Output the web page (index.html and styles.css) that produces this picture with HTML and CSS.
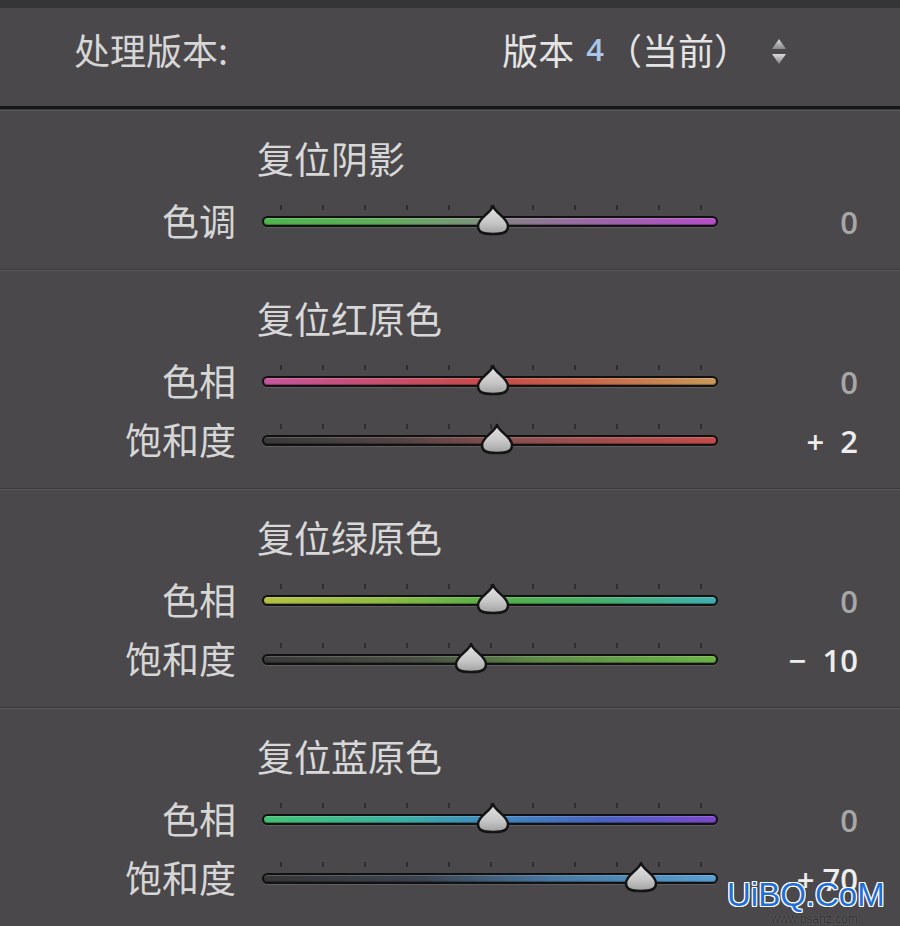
FILE: index.html
```html
<!DOCTYPE html>
<html lang="zh">
<head>
<meta charset="utf-8">
<title>处理版本</title>
<link rel="stylesheet" href="styles.css">
</head>
<body>
<div class="panel">
  <div class="header">
    <span class="hlabel">处理版本:</span>
    <span class="hvalue">版本 <span class="num">4</span>（当前）<svg class="updown" width="18" height="30" viewBox="0 0 18 30"><defs><linearGradient id="ag" x1="0" y1="0" x2="0" y2="1"><stop offset="0" stop-color="#dadada"/><stop offset="1" stop-color="#858585"/></linearGradient></defs><path d="M9 2 L16 12 L2 12 Z" fill="url(#ag)"/><path d="M2 17 L16 17 L9 27 Z" fill="url(#ag)"/></svg></span>
  </div>

  <div class="section">
    <div class="title">复位阴影</div>
    <div class="row">
      <div class="label">色调</div>
      <div class="slider">
        <div class="ticks"></div>
        <div class="track tone"></div>
        <svg class="thumb" style="left:213px" width="36" height="32" viewBox="0 0 36 32"><use href="#thumbshape"/></svg>
      </div>
      <div class="value zero">0</div>
    </div>
  </div>

  <div class="section">
    <div class="title">复位红原色</div>
    <div class="row">
      <div class="label">色相</div>
      <div class="slider">
        <div class="ticks"></div>
        <div class="track red-hue"></div>
        <svg class="thumb" style="left:213px" width="36" height="32" viewBox="0 0 36 32"><use href="#thumbshape"/></svg>
      </div>
      <div class="value zero">0</div>
    </div>
    <div class="row">
      <div class="label">饱和度</div>
      <div class="slider">
        <div class="ticks"></div>
        <div class="track red-sat"></div>
        <svg class="thumb" style="left:217px" width="36" height="32" viewBox="0 0 36 32"><use href="#thumbshape"/></svg>
      </div>
      <div class="value">+  2</div>
    </div>
  </div>

  <div class="section">
    <div class="title">复位绿原色</div>
    <div class="row">
      <div class="label">色相</div>
      <div class="slider">
        <div class="ticks"></div>
        <div class="track green-hue"></div>
        <svg class="thumb" style="left:213px" width="36" height="32" viewBox="0 0 36 32"><use href="#thumbshape"/></svg>
      </div>
      <div class="value zero">0</div>
    </div>
    <div class="row">
      <div class="label">饱和度</div>
      <div class="slider">
        <div class="ticks"></div>
        <div class="track green-sat"></div>
        <svg class="thumb" style="left:191px" width="36" height="32" viewBox="0 0 36 32"><use href="#thumbshape"/></svg>
      </div>
      <div class="value">−  10</div>
    </div>
  </div>

  <div class="section">
    <div class="title">复位蓝原色</div>
    <div class="row">
      <div class="label">色相</div>
      <div class="slider">
        <div class="ticks"></div>
        <div class="track blue-hue"></div>
        <svg class="thumb" style="left:213px" width="36" height="32" viewBox="0 0 36 32"><use href="#thumbshape"/></svg>
      </div>
      <div class="value zero">0</div>
    </div>
    <div class="row">
      <div class="label">饱和度</div>
      <div class="slider">
        <div class="ticks"></div>
        <div class="track blue-sat"></div>
        <svg class="thumb" style="left:361px" width="36" height="32" viewBox="0 0 36 32"><use href="#thumbshape"/></svg>
      </div>
      <div class="value">+ 70</div>
    </div>
  </div>

  <div class="watermark">
    <span class="wm-main">UiBQ.CoM</span>
    <span class="wm-sub">www.psahz.com</span>
  </div>
</div>

<svg class="defs" width="0" height="0">
  <defs>
    <linearGradient id="tg" x1="0" y1="0" x2="0" y2="1">
      <stop offset="0" stop-color="#e4e4e4"/>
      <stop offset="0.6" stop-color="#c6c6c6"/>
      <stop offset="1" stop-color="#a0a0a0"/>
    </linearGradient>
    <path id="thumbshape" d="M18 2 C20 9 33 14 33 22 C33 28 29 30 18 30 C7 30 3 28 3 22 C3 14 16 9 18 2 Z" fill="url(#tg)" stroke="#141414" stroke-width="2.6" stroke-linejoin="round"/>
  </defs>
</svg>
</body>
</html>
```

FILE: styles.css
```css
html, body {
  margin: 0;
  padding: 0;
  background: #4a484b;
}

body {
  width: 900px;
  height: 926px;
  overflow: hidden;
  font-family: "Noto Sans CJK SC", "Noto Sans", sans-serif;
  color: #d9d9d9;
}

.panel {
  position: relative;
  width: 900px;
  height: 926px;
  background: #4a484b;
}

.header {
  display: flex;
  align-items: center;
  justify-content: space-between;
  border-top: 8px solid #353437;
  border-bottom: 3px solid #161616;
  padding: 19px 112px 35px 74px;
  height: 44px;
  font-size: 36px;
  line-height: 44px;
}

.hlabel {
  color: #d6d6d6;
}

.hvalue {
  display: flex;
  align-items: center;
  color: #e4e4e4;
}

.hvalue .num {
  color: #a9c6ea;
  font-family: "Open Sans", sans-serif;
  font-weight: 600;
  font-size: 31px;
  margin: 0 2px 0 12px;
}

.updown {
  margin-left: 20px;
  margin-top: 6px;
}

.section {
  border-top: 1px solid #3a393c;
  box-shadow: inset 0 1px 0 #59585b;
  padding: 28px 0 18px;
}

.title {
  padding-left: 257px;
  font-size: 37px;
  line-height: 40px;
  padding-bottom: 4px;
  color: #d8d8d8;
  margin-bottom: 10px;
  box-sizing: border-box;
  height: 44px;
}

.row {
  display: flex;
  align-items: center;
  height: 59px;
}

.label {
  width: 236px;
  text-align: right;
  font-size: 37px;
  line-height: 40px;
  padding-bottom: 4px;
  color: #d6d6d6;
}

.slider {
  position: relative;
  margin-left: 26px;
  width: 456px;
  padding-bottom: 12px;
  padding-top: 1px;
}

.ticks {
  margin: 0 17px 0 18px;
  height: 5px;
  background-image: linear-gradient(90deg, #2c2b2e 0, #2c2b2e 2px, transparent 2px);
  background-size: 42px 5px;
  background-repeat: repeat-x;
  width: 422px;
  margin-bottom: 6px;
  opacity: 0.9;
}

.track {
  height: 7px;
  border: 2px solid #111;
  border-radius: 6px;
  box-shadow: 0 1px 0 rgba(255,255,255,0.12), inset 0 1px 0 rgba(255,255,255,0.18), inset 0 -1px 1px rgba(0,0,0,0.35);
}

.tone {
  background: linear-gradient(90deg, #4fb64c 0%, #5fae5a 25%, #7f937e 48%, #8a7f8c 55%, #a062ae 78%, #b64ec8 100%);
}

.red-hue {
  background: linear-gradient(90deg, #c6569e 0%, #c84f6c 28%, #c84a48 50%, #c8684a 72%, #c89a58 100%);
}

.red-sat {
  background: linear-gradient(90deg, #3a3a3a 0%, #544444 30%, #8a5050 55%, #c44c4c 100%);
}

.green-hue {
  background: linear-gradient(90deg, #b6c242 0%, #92bc44 25%, #58b048 50%, #48b068 72%, #40b0b2 100%);
}

.green-sat {
  background: linear-gradient(90deg, #3a3a3a 0%, #4a5044 35%, #5e8a48 60%, #6cb446 100%);
}

.blue-hue {
  background: linear-gradient(90deg, #42c474 0%, #3cb0a2 30%, #3f8ac0 50%, #4a62c0 75%, #7c48cc 100%);
}

.blue-sat {
  background: linear-gradient(90deg, #363636 0%, #3c4450 35%, #4a7aa4 65%, #58a0d2 100%);
}

.thumb {
  position: absolute;
  top: 0;
  display: block;
}

.value {
  width: 140px;
  text-align: right;
  font-family: "Open Sans", sans-serif;
  font-weight: 600;
  font-size: 31px;
  line-height: 44px;
  color: #ededed;
  white-space: pre;
}

.value.zero {
  color: #a7a7a7;
}

.defs {
  position: absolute;
  width: 0;
  height: 0;
}

.watermark {
  position: absolute;
  left: 727px;
  top: 876px;
  width: 170px;
}

.wm-main {
  display: block;
  font-family: "Liberation Sans", Arial, sans-serif;
  font-size: 33px;
  line-height: 38px;
  color: #1f6fd8;
  text-shadow: 1px 0 0 #fff, -1px 0 0 #fff, 0 1px 0 #fff, 0 -1px 0 #fff, 1px 1px 0 #fff, -1px -1px 0 #fff, 1px -1px 0 #fff, -1px 1px 0 #fff;
}

.wm-sub {
  position: absolute;
  left: 44px;
  top: 37px;
  font-family: "Liberation Sans", Arial, sans-serif;
  font-size: 12px;
  line-height: 13px;
  color: #2c2c2c;
  text-shadow: 0 0 1px #888;
}
```
